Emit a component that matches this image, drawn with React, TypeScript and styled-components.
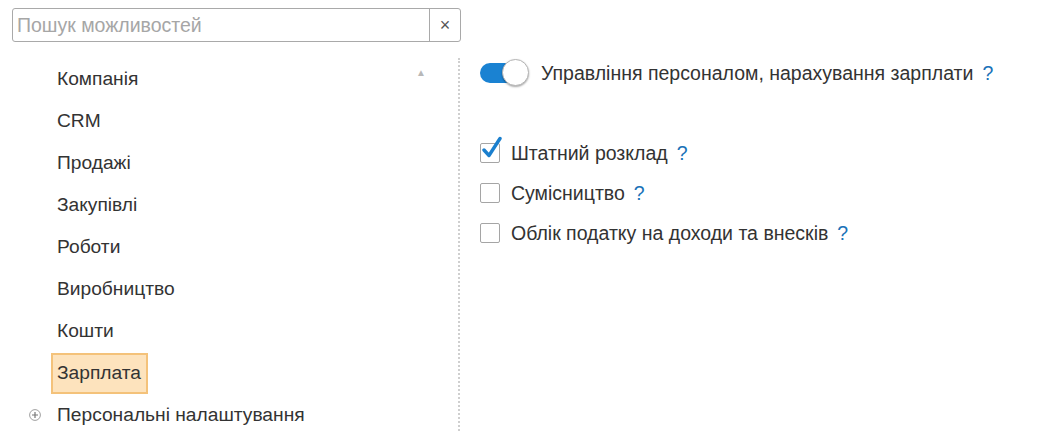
import React from "react";
import styled, {createGlobalStyle} from "styled-components";

const GlobalStyle = createGlobalStyle`
    body {
        margin: 0;
        background: #ffffff;
        font-family: "Liberation Sans", Arial, sans-serif;
        color: #333333;
    }
`

const sections = [
    "Компанія",
    "CRM",
    "Продажі",
    "Закупівлі",
    "Роботи",
    "Виробництво",
    "Кошти",
    "Зарплата",
]

const options = [
    {label: "Штатний розклад", checked: true},
    {label: "Сумісництво", checked: false},
    {label: "Облік податку на доходи та внесків", checked: false},
]

export default function App() {
    return (
        <Page>
            <GlobalStyle/>
            <SearchBox>
                <SearchInput placeholder="Пошук можливостей"/>
                <ClearButton>×</ClearButton>
            </SearchBox>
            <Body>
                <Sidebar>
                    <CollapseMark>▲</CollapseMark>
                    {sections.map(name => (
                        <Item key={name}>
                            <ItemLabel $active={name === "Зарплата"}>{name}</ItemLabel>
                        </Item>
                    ))}
                    <Item>
                        <PlusIcon>
                            <svg width="12" height="12" viewBox="0 0 12 12">
                                <circle cx="6" cy="6" r="5.4" fill="none" stroke="#a0a0a0" strokeWidth="1"/>
                                <path d="M6 3v6M3 6h6" stroke="#777" strokeWidth="1.2"/>
                            </svg>
                        </PlusIcon>
                        <ItemLabel>Персональні налаштування</ItemLabel>
                    </Item>
                </Sidebar>
                <Content>
                    <ToggleRow>
                        <Switch>
                            <Knob/>
                        </Switch>
                        <Label>Управління персоналом, нарахування зарплати</Label>
                        <Help>?</Help>
                    </ToggleRow>
                    <Options>
                        {options.map(o => (
                            <OptionRow key={o.label}>
                                <Checkbox>
                                    {o.checked && (
                                        <svg width="22" height="24" viewBox="0 0 22 24">
                                            <path d="M4 14l5 5.5L20 2.5" fill="none" stroke="#1a7fce"
                                                  strokeWidth="3.4" strokeLinecap="round" strokeLinejoin="round"/>
                                        </svg>
                                    )}
                                </Checkbox>
                                <Label>{o.label}</Label>
                                <Help>?</Help>
                            </OptionRow>
                        ))}
                    </Options>
                </Content>
            </Body>
        </Page>
    )
}

const Page = styled.div`
    width: 1043px;
    height: 433px;
    overflow: hidden;
    font-size: 19.2px;
`

const SearchBox = styled.div`
    display: flex;
    margin: 8px 0 0 12px;
    width: 449px;
    height: 34px;
    box-sizing: border-box;
    border: 1px solid #a9a9a9;
    border-radius: 3px;
`

const SearchInput = styled.input`
    flex: 1;
    min-width: 0;
    border: none;
    outline: none;
    padding: 0 4px;
    font-family: "Liberation Sans", Arial, sans-serif;
    font-size: 19.5px;
    color: #333;
    background: transparent;

    &::placeholder {
        color: #a6a6a6;
    }
`

const ClearButton = styled.div`
    width: 30px;
    border-left: 1px solid #a9a9a9;
    display: flex;
    align-items: center;
    justify-content: center;
    font-size: 18px;
    color: #555;
`

const Body = styled.div`
    display: flex;
    margin-top: 16px;
`

const Sidebar = styled.div`
    position: relative;
    width: 458px;
    border-right: 2px dotted #cfcfcf;
    height: 400px;
`

const CollapseMark = styled.div`
    position: absolute;
    left: 416px;
    top: 9px;
    font-size: 10px;
    color: #b8b8b8;
`

const Item = styled.div`
    position: relative;
    height: 42px;
    display: flex;
    align-items: center;
    padding-left: 51px;
`

const ItemLabel = styled.div<{ $active?: boolean }>`
    box-sizing: border-box;
    height: 41px;
    display: flex;
    align-items: center;
    padding: 0 5px 1px 4px;
    border: 2px solid ${p => p.$active ? "#f4c27a" : "transparent"};
    background: ${p => p.$active ? "#fde3bd" : "transparent"};
    color: #333;
`

const PlusIcon = styled.span`
    position: absolute;
    left: 29px;
    top: 15px;
    display: flex;
`

const Content = styled.div`
    padding-left: 20px;
    font-size: 19.5px;
`

const ToggleRow = styled.div`
    display: flex;
    align-items: center;
    height: 30px;
`

const Switch = styled.div`
    position: relative;
    width: 36px;
    height: 20px;
    border-radius: 10px;
    background: #1a82d2;
    margin-right: 25px;
`

const Knob = styled.div`
    position: absolute;
    left: 22px;
    top: -4px;
    width: 25px;
    height: 25px;
    border-radius: 50%;
    background: #fff;
    border: 1px solid #b5b5b5;
    box-shadow: 0 1px 2px rgba(0, 0, 0, 0.35);
`

const Label = styled.span`
    color: #333;
`

const Help = styled.span`
    color: #1a72b8;
    margin-left: 9px;
`

const Options = styled.div`
    margin-top: 45px;
`

const OptionRow = styled.div`
    display: flex;
    align-items: center;
    height: 40px;
`

const Checkbox = styled.div`
    position: relative;
    width: 20px;
    height: 20px;
    box-sizing: border-box;
    border: 1px solid #a5a5a5;
    border-radius: 2px;
    margin-right: 11px;

    svg {
        position: absolute;
        left: -1px;
        top: -8px;
    }
`
